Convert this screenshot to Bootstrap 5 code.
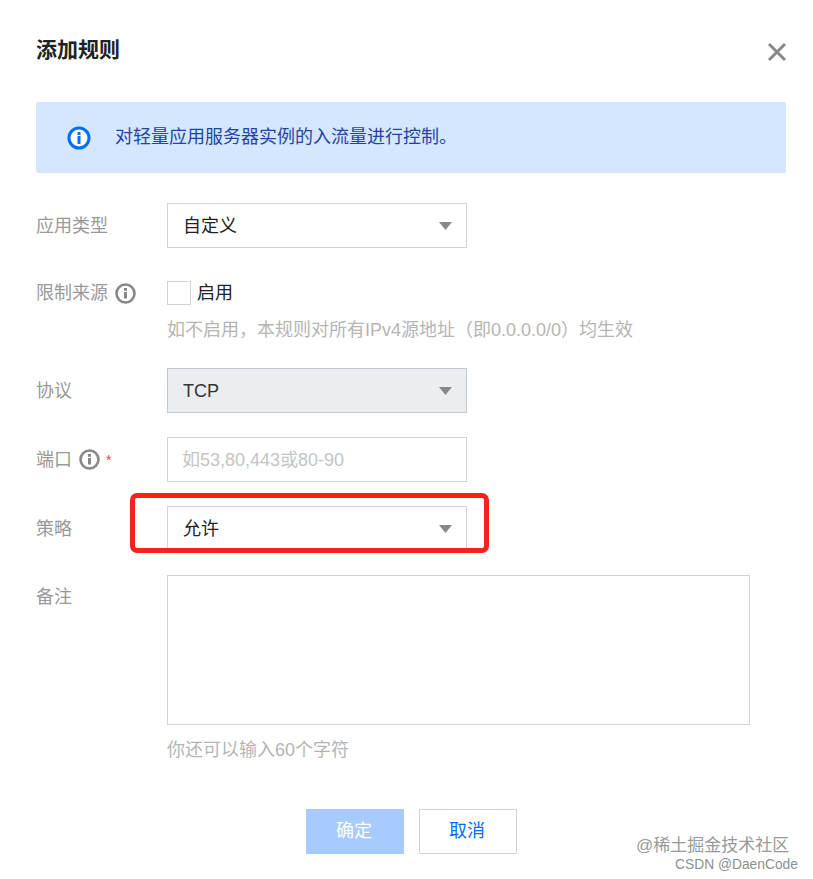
<!DOCTYPE html>
<html lang="zh">
<head>
<meta charset="utf-8">
<title>添加规则</title>
<link href="https://cdn.jsdelivr.net/npm/bootstrap@5.3.0/dist/css/bootstrap.min.css" rel="stylesheet">
<style>
html,body{height:879px;overflow:hidden}
body{font-family:"Liberation Sans","Noto Sans CJK SC",sans-serif;font-size:18px;color:#222;background:#fff;position:relative;margin:0}
.dlg{padding:37px 27px 0 36px}
.dlg-title{font-size:21px;font-weight:700;line-height:26px;margin:0;color:#222}
.dlg-head{height:65px}
.dlg-close{width:20px;height:20px;margin-top:5px;padding:0;border:0;background:none;line-height:0;margin-right:-1px}
.notice{height:71px;background:#d5e7ff;color:#2444a0;padding:0 0 0 31px;border-radius:2px;gap:24px;margin-bottom:30px}
.frow{display:flex}
.flabel{width:131px;flex:none;color:#999;line-height:26px;padding-top:10px;display:flex;align-items:flex-start;gap:7px}
.flabel svg{margin-top:2px;flex:none}
.star{color:#e54545;font-size:14px;margin-left:-1px}
.sel,.txt{width:300px;height:45px;border:1px solid #d3d3d3;border-radius:0;font-size:18px;padding:1px 15px 0;color:#222;box-shadow:none}
.txt{padding-left:14px}
.sel{background-image:url("data:image/svg+xml,%3Csvg xmlns='http://www.w3.org/2000/svg' width='13' height='8'%3E%3Cpath d='M0 0h13L6.500 8z' fill='%23888'/%3E%3C/svg%3E");background-size:13px 8px;background-position:right 14px center}
.sel:disabled{background-color:#ebeef1;border-color:#c4c8cc;color:#333;opacity:1}
.txt::placeholder{color:#c4c4c4;opacity:1}
.area{width:583px;height:150px;border:1px solid #d3d3d3;border-radius:0;resize:none;box-shadow:none}
.form-check .chk{width:24px;height:24px;border:1px solid #d3d3d3;border-radius:0;margin:0 6px 0 0;float:none}
.chkrow{height:24px}
.chkrow label{line-height:24px;color:#222}
.hintline{color:#b5b5b5;line-height:26px}
.hintgap{margin-top:12px}
.anchor{position:relative}
.redbox{position:absolute;left:-37px;top:-13px;width:359px;height:60px;border:5px solid #f5231c;border-radius:7px;pointer-events:none}
.acts{gap:15px;padding-left:270px}
.bt{width:98px;height:45px;border-radius:0;font-size:18px;padding:0 2px 0 0;line-height:43px}
.bt-ok,.bt-ok:disabled{background:#a8cbff;border:1px solid #a8cbff;color:#fff;opacity:1}
.bt-no{background:#fff;border:1px solid #d3d3d3;color:#006eff}
.mark1{position:absolute;left:636px;top:835px;font-size:17px;color:#999;line-height:22px}
.mark2{position:absolute;left:675px;top:856px;font-size:13.800px;color:#8f8f8f;line-height:18px}
.rowa{margin-bottom:33px}
.rowb{margin-bottom:25px}
.rowc{margin-bottom:24px}
.rowd{margin-bottom:12px}
.rowe{margin-bottom:46px}
.lab-top{padding-top:0;line-height:24px}
.lab-note{padding-top:9px}
.lab-none{padding:0}
</style>
</head>
<body>
<div class="dlg">
  <div class="dlg-head d-flex justify-content-between align-items-start">
    <h5 class="dlg-title">添加规则</h5>
    <button class="dlg-close" type="button" aria-label="关闭"><svg width="20" height="20" viewBox="0 0 20 20"><path d="M2 2l16 16M18 2L2 18" stroke="#888" stroke-width="3" fill="none"/></svg></button>
  </div>

  <div class="notice d-flex align-items-center">
    <svg width="24" height="24" viewBox="0 0 24 24"><circle cx="12" cy="12" r="10" fill="#fff" stroke="#006eff" stroke-width="3"/><rect x="10.500" y="10" width="3" height="8" fill="#006eff"/><rect x="10.500" y="6" width="3" height="3" fill="#006eff"/></svg>
    <span>对轻量应用服务器实例的入流量进行控制。</span>
  </div>

  <div class="frow rowa">
    <div class="flabel">应用类型</div>
    <select class="form-select sel"><option>自定义</option></select>
  </div>

  <div class="frow rowb">
    <div class="flabel lab-top">限制来源
      <svg width="21" height="21" viewBox="0 0 21 21"><circle cx="10.500" cy="10.500" r="9" fill="none" stroke="#888" stroke-width="2.600"/><rect x="9" y="9" width="3" height="6.500" fill="#888"/><rect x="9" y="5" width="3" height="2.800" fill="#888"/></svg>
    </div>
    <div>
      <div class="form-check chkrow d-flex align-items-center p-0 m-0">
        <input class="form-check-input chk" type="checkbox" id="c1">
        <label class="form-check-label" for="c1">启用</label>
      </div>
      <div class="hintline hintgap">如不启用，本规则对所有IPv4源地址（即0.0.0.0/0）均生效</div>
    </div>
  </div>

  <div class="frow rowc">
    <div class="flabel">协议</div>
    <select class="form-select sel" disabled><option>TCP</option></select>
  </div>

  <div class="frow rowc">
    <div class="flabel">端口
      <svg width="21" height="21" viewBox="0 0 21 21"><circle cx="10.500" cy="10.500" r="9" fill="none" stroke="#888" stroke-width="2.600"/><rect x="9" y="9" width="3" height="6.500" fill="#888"/><rect x="9" y="5" width="3" height="2.800" fill="#888"/></svg>
      <span class="star">*</span>
    </div>
    <input class="form-control txt" type="text" placeholder="如53,80,443或80-90">
  </div>

  <div class="frow rowc">
    <div class="flabel">策略</div>
    <div class="anchor">
      <select class="form-select sel"><option>允许</option></select>
      <div class="redbox"></div>
    </div>
  </div>

  <div class="frow rowd">
    <div class="flabel lab-note">备注</div>
    <textarea class="form-control area"></textarea>
  </div>

  <div class="frow rowe">
    <div class="flabel lab-none"></div>
    <div class="hintline">你还可以输入60个字符</div>
  </div>

  <div class="d-flex acts">
    <button class="btn bt bt-ok" type="button" disabled>确定</button>
    <button class="btn bt bt-no" type="button">取消</button>
  </div>
</div>
<div class="mark1">@稀土掘金技术社区</div>
<div class="mark2">CSDN @DaenCode</div>
<script src="https://cdn.jsdelivr.net/npm/bootstrap@5.3.0/dist/js/bootstrap.bundle.min.js"></script>
</body>
</html>
